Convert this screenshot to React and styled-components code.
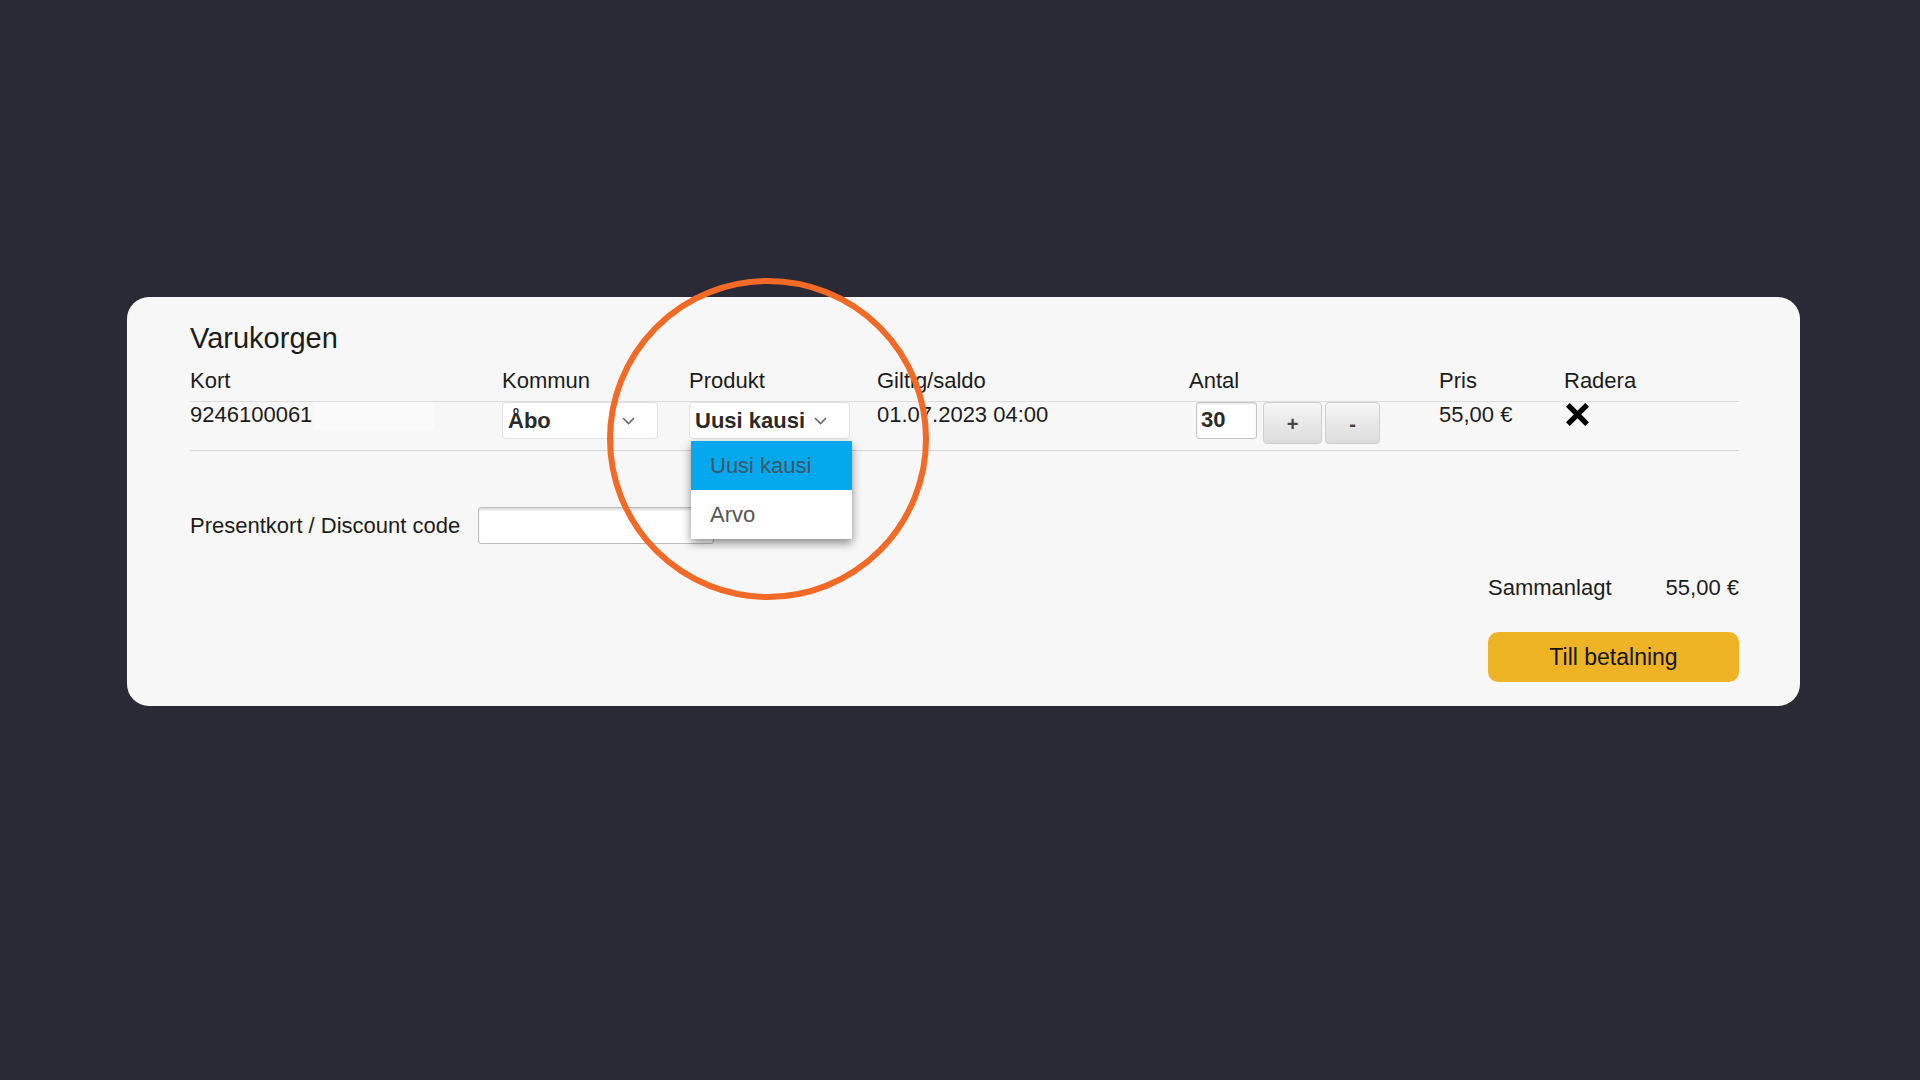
import React from 'react';
import styled, { createGlobalStyle } from 'styled-components';

const GlobalStyle = createGlobalStyle`
  html, body {
    margin: 0;
    padding: 0;
    background: #2a2936;
  }
  body {
    font-family: "Liberation Sans", Arial, sans-serif;
    color: #1c1c1c;
  }
  #root {
    min-height: 100vh;
  }
`;

const Page = styled.div`
  min-height: 1080px;
  padding-top: 297px;
  padding-left: 127px;
  box-sizing: border-box;
`;

const Card = styled.div`
  position: relative;
  width: 1673px;
  box-sizing: border-box;
  background: #f7f7f7;
  border-radius: 22px;
  padding: 24px 61px 24px 63px;
`;

const Title = styled.h2`
  margin: 0 0 13px;
  font-size: 29px;
  line-height: 34px;
  font-weight: 400;
`;

const Row = styled.div`
  display: grid;
  grid-template-columns: 312px 187px 188px 312px 250px 125px 175px;
  height: ${({ h }) => h}px;
  border-bottom: 1px solid ${({ line }) => line};
  font-size: 22px;
  line-height: 26px;
`;

const Cell = styled.div`
  position: relative;
  display: flex;
  align-items: flex-start;
  padding-left: ${({ pl }) => pl || 0}px;
`;

const Redacted = styled.span`
  display: inline-block;
  width: 120px;
  height: 28px;
  background: #fafafa;
  margin-left: 2px;
`;

const Select = styled.div`
  display: flex;
  align-items: center;
  justify-content: space-between;
  width: ${({ w }) => w}px;
  height: 37px;
  box-sizing: border-box;
  background: #fff;
  border: 1px solid #e3e3e3;
  border-radius: 4px;
  padding: 0 22px 0 5px;
  font-weight: 700;
  color: #2a2a2a;
`;

const Menu = styled.div`
  position: absolute;
  top: 39px;
  left: 2px;
  width: 161px;
  background: #fff;
  border-radius: 2px;
  box-shadow: 0 4px 10px rgba(0, 0, 0, 0.45);
  z-index: 2;
`;

const Option = styled.div`
  height: 49px;
  display: flex;
  align-items: center;
  padding-left: 19px;
  font-size: 22px;
  background: ${({ active }) => (active ? '#03a9ec' : '#fff')};
  color: ${({ active }) => (active ? '#3b5566' : '#555')};
`;

const Qty = styled.div`
  display: flex;
  align-items: flex-start;
`;

const QtyInput = styled.div`
  width: 61px;
  height: 37px;
  box-sizing: border-box;
  background: #fff;
  border: 1px solid #c6c6c6;
  border-radius: 3px;
  box-shadow: inset 0 1px 2px rgba(0, 0, 0, 0.12);
  padding: 4px 0 0 4px;
  font-weight: 700;
  color: #2a2a2a;
`;

const StepButton = styled.button`
  width: ${({ w }) => w}px;
  height: 42px;
  margin-left: ${({ ml }) => ml}px;
  border: 1px solid #cfcfcf;
  border-radius: 4px;
  background: linear-gradient(#f6f6f6, #dcdcdc);
  font-family: "Liberation Sans", Arial, sans-serif;
  font-size: 20px;
  font-weight: 700;
  color: #444;
  padding: 2px 0 0;
`;

const Discount = styled.div`
  display: flex;
  align-items: center;
  gap: 18px;
  margin-top: 56px;
  height: 37px;
  font-size: 22px;
`;

const CodeInput = styled.div`
  width: 236px;
  height: 37px;
  box-sizing: border-box;
  background: #fff;
  border: 1px solid #bdbdbd;
  border-radius: 3px;
  box-shadow: inset 0 2px 2px rgba(0, 0, 0, 0.14);
`;

const Summary = styled.div`
  display: flex;
  flex-direction: column;
  align-items: flex-end;
  margin-top: 31px;
`;

const TotalLine = styled.div`
  display: flex;
  justify-content: space-between;
  width: 251px;
  font-size: 22px;
  line-height: 26px;
`;

const PayButton = styled.button`
  margin-top: 31px;
  width: 251px;
  height: 50px;
  border: none;
  border-radius: 10px;
  background: #efb426;
  font-family: "Liberation Sans", Arial, sans-serif;
  font-size: 23px;
  color: #141414;
`;

const Highlight = styled.svg`
  position: absolute;
  left: 479px;
  top: -20px;
  pointer-events: none;
  z-index: 3;
`;

const Chevron = () => (
  <svg width="13" height="8" viewBox="0 0 13 8">
    <path d="M1 1l5.5 5.5L12 1" fill="none" stroke="#666" strokeWidth="1.6" />
  </svg>
);

const Cross = () => (
  <svg width="25" height="25" viewBox="0 0 26 26">
    <path d="M3 3l20 20M23 3L3 23" stroke="#000" strokeWidth="5.5" />
  </svg>
);

const headers = ['Kort', 'Kommun', 'Produkt', 'Giltig/saldo', 'Antal', 'Pris', 'Radera'];

export default function App() {
  return (
    <>
      <GlobalStyle />
      <Page>
        <Card>
          <Title>Varukorgen</Title>
          <Row h={33} line="#dddddd">
            {headers.map((h) => (
              <Cell key={h}>{h}</Cell>
            ))}
          </Row>
          <Row h={48} line="#d6d6d6">
            <Cell>
              9246100061
              <Redacted />
            </Cell>
            <Cell>
              <Select w={156}>
                Åbo
                <Chevron />
              </Select>
            </Cell>
            <Cell>
              <Select w={161}>
                Uusi kausi
                <Chevron />
              </Select>
              <Menu>
                <Option active>Uusi kausi</Option>
                <Option>Arvo</Option>
              </Menu>
            </Cell>
            <Cell>01.07.2023 04:00</Cell>
            <Cell pl={7}>
              <Qty>
                <QtyInput>30</QtyInput>
                <StepButton w={59} ml={6}>+</StepButton>
                <StepButton w={55} ml={3}>-</StepButton>
              </Qty>
            </Cell>
            <Cell>55,00 €</Cell>
            <Cell pl={1}>
              <Cross />
            </Cell>
          </Row>
          <Discount>
            Presentkort / Discount code
            <CodeInput />
          </Discount>
          <Summary>
            <TotalLine>
              <span>Sammanlagt</span>
              <span>55,00 €</span>
            </TotalLine>
            <PayButton>Till betalning</PayButton>
          </Summary>
          <Highlight width="324" height="324" viewBox="0 0 324 324">
            <circle cx="162" cy="162" r="158" fill="none" stroke="#f26a26" strokeWidth="6" />
          </Highlight>
        </Card>
      </Page>
    </>
  );
}
